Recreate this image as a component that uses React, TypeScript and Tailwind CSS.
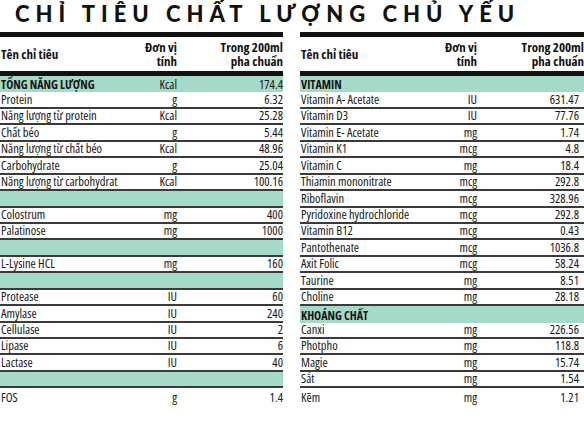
type Row = {
  name: string;
  unit?: string;
  value?: string;
  kind?: 'head' | 'blank' | 'row';
};

const leftRows: Row[] = [
  { name: 'TỔNG NĂNG LƯỢNG', unit: 'Kcal', value: '174.4', kind: 'head' },
  { name: 'Protein', unit: 'g', value: '6.32' },
  { name: 'Năng lượng từ protein', unit: 'Kcal', value: '25.28' },
  { name: 'Chất béo', unit: 'g', value: '5.44' },
  { name: 'Năng lượng từ chất béo', unit: 'Kcal', value: '48.96' },
  { name: 'Carbohydrate', unit: 'g', value: '25.04' },
  { name: 'Năng lượng từ carbohydrat', unit: 'Kcal', value: '100.16' },
  { name: '', kind: 'blank' },
  { name: 'Colostrum', unit: 'mg', value: '400' },
  { name: 'Palatinose', unit: 'mg', value: '1000' },
  { name: '', kind: 'blank' },
  { name: 'L-Lysine HCL', unit: 'mg', value: '160' },
  { name: '', kind: 'blank' },
  { name: 'Protease', unit: 'IU', value: '60' },
  { name: 'Amylase', unit: 'IU', value: '240' },
  { name: 'Cellulase', unit: 'IU', value: '2' },
  { name: 'Lipase', unit: 'IU', value: '6' },
  { name: 'Lactase', unit: 'IU', value: '40' },
  { name: '', kind: 'blank' },
  { name: 'FOS', unit: 'g', value: '1.4' },
];

const rightRows: Row[] = [
  { name: 'VITAMIN', kind: 'head' },
  { name: 'Vitamin A- Acetate', unit: 'IU', value: '631.47' },
  { name: 'Vitamin D3', unit: 'IU', value: '77.76' },
  { name: 'Vitamin E- Acetate', unit: 'mg', value: '1.74' },
  { name: 'Vitamin K1', unit: 'mcg', value: '4.8' },
  { name: 'Vitamin C', unit: 'mg', value: '18.4' },
  { name: 'Thiamin mononitrate', unit: 'mcg', value: '292.8' },
  { name: 'Riboflavin', unit: 'mcg', value: '328.96' },
  { name: 'Pyridoxine hydrochloride', unit: 'mcg', value: '292.8' },
  { name: 'Vitamin B12', unit: 'mcg', value: '0.43' },
  { name: 'Pantothenate', unit: 'mcg', value: '1036.8' },
  { name: 'Axit Folic', unit: 'mcg', value: '58.24' },
  { name: 'Taurine', unit: 'mg', value: '8.51' },
  { name: 'Choline', unit: 'mg', value: '28.18' },
  { name: 'KHOÁNG CHẤT', kind: 'head' },
  { name: 'Canxi', unit: 'mg', value: '226.56' },
  { name: 'Photpho', unit: 'mg', value: '118.8' },
  { name: 'Magie', unit: 'mg', value: '15.74' },
  { name: 'Sắt', unit: 'mg', value: '1.54' },
  { name: 'Kẽm', unit: 'mg', value: '1.21' },
];

function NutritionTable({ rows, right }: { rows: Row[]; right?: boolean }) {
  return (
    <div className="flex flex-col">
      <div className="h-[5px] bg-[#111]" />
      <div className="h-[34px] flex items-center font-bold text-[13px] leading-[14px] text-[#111]">
        <div className="w-[120px] pl-[1px] whitespace-nowrap">Tên chỉ tiêu</div>
        <div className="w-[57px] flex flex-col items-end whitespace-nowrap">
          <div>Đơn vị</div>
          <div>tính</div>
        </div>
        <div className="flex-1 flex flex-col items-end whitespace-nowrap">
          <div>Trong 200ml</div>
          <div>pha chuẩn</div>
        </div>
      </div>
      <div className="h-[5px] bg-[#111]" />
      {rows.map((r, i) => {
        const next = rows[i + 1];
        const line = next && r.kind !== 'head';
        const teal = r.kind === 'head' || r.kind === 'blank';
        return (
          <div
            key={i}
            className={`h-[16.45px] flex items-end pb-[1px] text-[12.5px] leading-[13px] font-medium text-[#161616] ${
              teal ? 'bg-[#a4dac7]' : ''
            } ${line ? 'border-b-2 border-[#3a3a3a]' : ''}`}
          >
            <div className={`w-[120px] pl-[1px] whitespace-nowrap ${r.kind === 'head' ? 'font-bold text-[12px]' : ''}`}>
              {r.name}
            </div>
            <div className="w-[57px] text-right">{r.unit}</div>
            <div className={`flex-1 text-right ${right ? 'pr-[5px]' : ''}`}>{r.value}</div>
          </div>
        );
      })}
    </div>
  );
}

export default function App() {
  return (
    <div className="w-[584px] h-[429px] bg-white overflow-hidden font-['Open_Sans','DejaVu_Sans',sans-serif] [font-stretch:condensed]">
      <h1 className="h-[32px] pl-[15px] pt-[1px] font-['Lato',sans-serif] [font-stretch:normal] font-black text-[22px] leading-[26px] tracking-[6px] text-[#111] whitespace-nowrap">
        CHỈ TIÊU CHẤT LƯỢNG CHỦ YẾU
      </h1>
      <div className="flex gap-[17px]">
        <div className="w-[283px]">
          <NutritionTable rows={leftRows} />
        </div>
        <div className="flex-1">
          <NutritionTable rows={rightRows} right />
        </div>
      </div>
    </div>
  );
}
